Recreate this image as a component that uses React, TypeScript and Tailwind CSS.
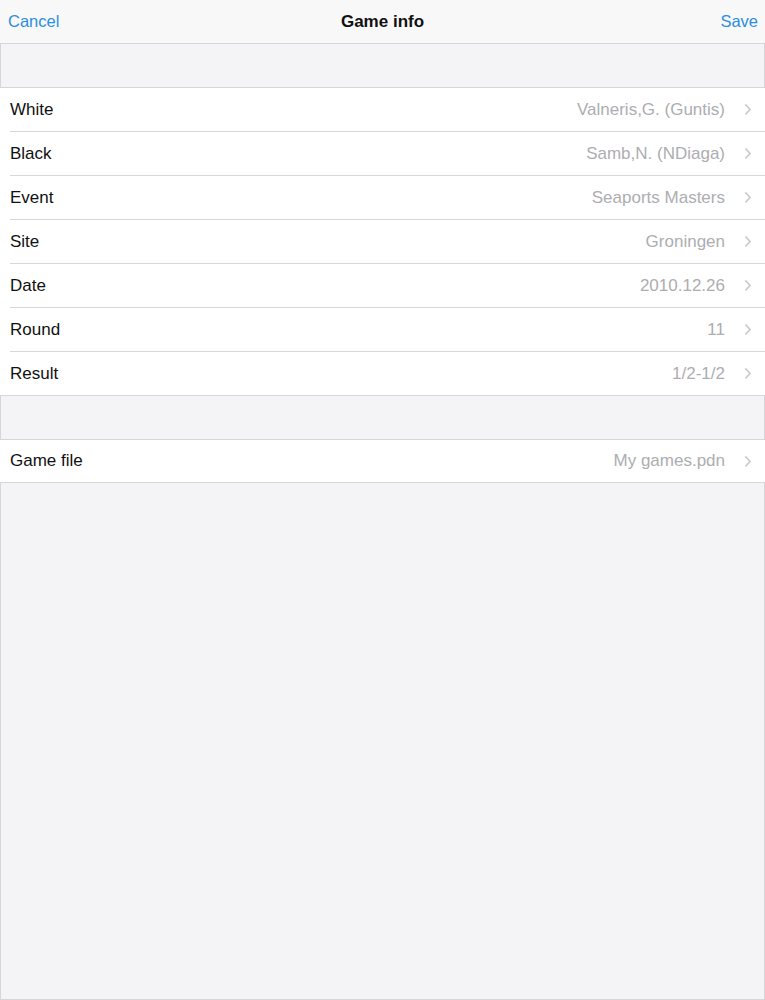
import React from "react";

const rows: [string, string][] = [
  ["White", "Valneris,G. (Guntis)"],
  ["Black", "Samb,N. (NDiaga)"],
  ["Event", "Seaports Masters"],
  ["Site", "Groningen"],
  ["Date", "2010.12.26"],
  ["Round", "11"],
  ["Result", "1/2-1/2"],
];

function Chevron() {
  return (
    <svg width="8" height="13" viewBox="0 0 8 13" className="ml-[19px] mr-[13px]">
      <path d="M1.5 1.5 L6 6.5 L1.5 11.5" fill="none" stroke="#c7c7cc" strokeWidth="1.6" />
    </svg>
  );
}

function Row({ label, value, last, h = "h-[44px]" }: { label: string; value: string; last?: boolean; h?: string }) {
  return (
    <div className={`bg-white pl-[10px] ${h}`}>
      <div className={`flex items-center h-full ${last ? "" : "border-b border-[#d8d8dc]"}`}>
        <span className="text-[17px] text-[#111]">{label}</span>
        <span className="ml-auto text-[17px] text-[#adadb2]">{value}</span>
        <Chevron />
      </div>
    </div>
  );
}

export default function App() {
  return (
    <div
      className="w-[765px] h-[1000px] flex flex-col bg-[#f4f3f6] overflow-hidden"
      style={{ fontFamily: '"Liberation Sans", Arial, sans-serif' }}
    >
      <div className="h-[44px] shrink-0 flex items-center bg-[#f8f8f9] border-b border-[#d6d6da] px-[8px] relative">
        <span className="text-[16.5px] text-[#2b8ee2]">Cancel</span>
        <span className="absolute left-0 right-0 text-center text-[17px] font-bold text-[#111] pointer-events-none">Game info</span>
        <span className="ml-auto text-[16.5px] text-[#2b8ee2] mr-[-1px]">Save</span>
      </div>
      <div className="h-[44px] shrink-0 border-x border-b border-[#d6d6da] bg-[#f4f3f6]" />
      <div className="flex flex-col shrink-0">
        {rows.map(([l, v], i) => (
          <Row key={l} label={l} value={v} last={i === rows.length - 1} h={i === rows.length - 1 ? "h-[43px]" : "h-[44px]"} />
        ))}
      </div>
      <div className="h-[45px] shrink-0 border border-[#d6d6da] bg-[#f4f3f6]" />
      <Row label="Game file" value="My games.pdn" last h="h-[42px]" />
      <div className="flex-1 border border-[#d6d6da] bg-[#f4f3f6]" />
    </div>
  );
}
